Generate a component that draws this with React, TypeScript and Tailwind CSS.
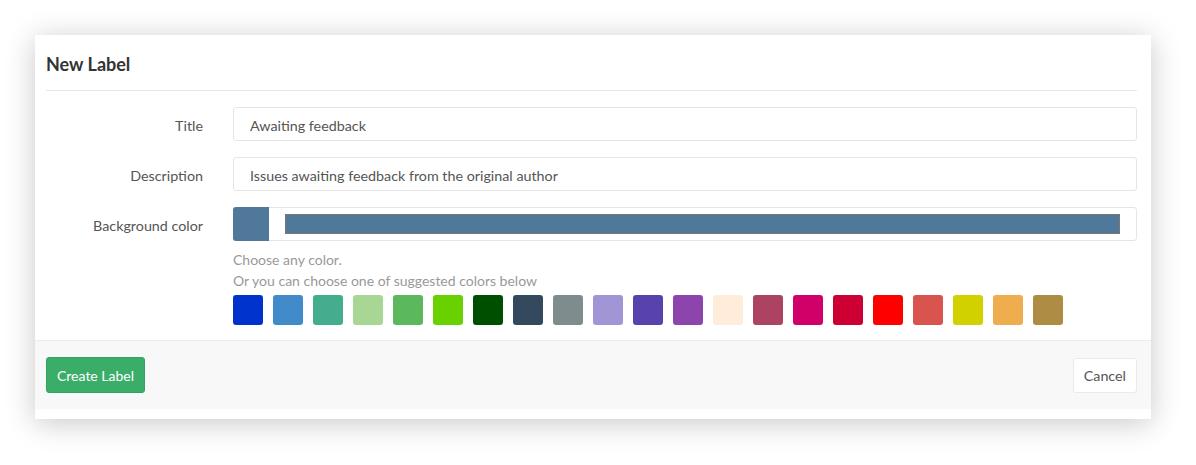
import React from "react";

const colors = [
  "#0033CC", "#428BCA", "#44AD8E", "#A8D695", "#5CB85C", "#69D100", "#004E00",
  "#34495E", "#7F8C8D", "#A295D6", "#5843AD", "#8E44AD", "#FFECDB", "#AD4363",
  "#D10069", "#CC0033", "#FF0000", "#D9534F", "#D1D100", "#F0AD4E", "#AD8D43",
];

export default function App() {
  return (
    <div className="w-[1196px] h-[465px] bg-white pt-[35px] pl-[35px]" style={{ fontFamily: "Lato, 'Noto Sans', sans-serif" }}>
      <div className="w-[1116px] h-[384px] bg-white shadow-[0_4px_28px_rgba(0,0,0,0.22)] flex flex-col">
        <div className="pl-[11px] pr-[14px]">
          <div className="h-[56px] flex items-center border-b border-[#e8e8e8]">
            <h3 className="text-[18px] font-bold text-[#333] leading-none pt-[2px]">New Label</h3>
          </div>
          <div className="pt-[16px] flex flex-col gap-[16px] text-[14.3px] text-[#555]">
            <div className="flex items-center">
              <div className="w-[157px] text-right pt-[4px]">Title</div>
              <div className="ml-[30px] flex-1 h-[34px] border border-[#e5e5e5] rounded-[3px] flex items-center px-[16px] pt-[4px]">Awaiting feedback</div>
            </div>
            <div className="flex items-center">
              <div className="w-[157px] text-right pt-[4px]">Description</div>
              <div className="ml-[30px] flex-1 h-[34px] border border-[#e5e5e5] rounded-[3px] flex items-center px-[16px] pt-[4px]">Issues awaiting feedback from the original author</div>
            </div>
            <div className="flex items-start">
              <div className="w-[157px] text-right h-[34px] flex items-center justify-end pt-[4px]">Background color</div>
              <div className="ml-[30px] flex-1">
                <div className="h-[34px] border border-[#e5e5e5] rounded-[3px] flex items-center">
                  <div className="w-[36px] h-[34px] -ml-px -my-px bg-[#4f789a] rounded-l-[3px]" />
                  <div className="ml-[16px] mr-[16px] flex-1 h-[20px] bg-[#4f789a] border border-[#777]" />
                </div>
                <div className="mt-[8px] text-[14px] text-[#999] leading-[21px]">
                  <p>Choose any color.</p>
                  <p>Or you can choose one of suggested colors below</p>
                </div>
                <div className="mt-[4px] flex gap-[10px]">
                  {colors.map((c) => (
                    <div key={c} className="w-[30px] h-[30px] rounded-[3px]" style={{ backgroundColor: c }} />
                  ))}
                </div>
              </div>
            </div>
          </div>
        </div>
        <div className="mt-[15px] h-[69px] bg-[#f8f8f8] border-t border-[#ececec] flex items-center justify-between pl-[11px] pr-[14px]">
          <button className="h-[36px] px-[10px] bg-[#3aae69] border border-[#35a261] rounded-[3px] text-white text-[14px] pt-[1px]">Create Label</button>
          <button className="h-[35px] px-[10px] bg-white border border-[#eaeaea] rounded-[3px] text-[#555] text-[14.3px] pt-[1px]">Cancel</button>
        </div>
      </div>
    </div>
  );
}
